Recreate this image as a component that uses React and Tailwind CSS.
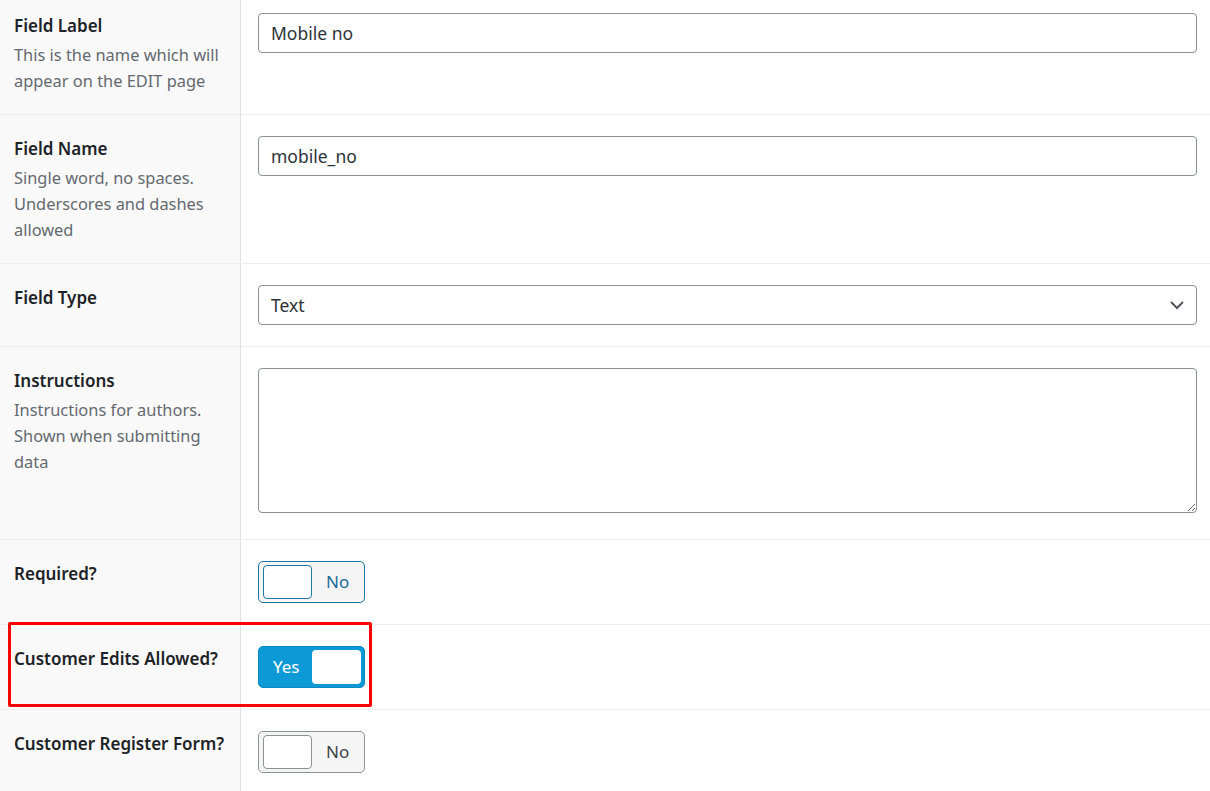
import React from "react";

function Label({ title, desc }) {
  return (
    <div className="w-[241px] shrink-0 bg-[#f9f9f9] border-r border-[#e1e1e1] pl-[14px] pr-[10px] pt-[21px] pb-[20px]">
      <div className="text-[17px] leading-[26px] font-semibold text-[#1d2327]">{title}</div>
      {desc && <div className="mt-[3px] text-[16.4px] leading-[26px] text-[#646970]">{desc}</div>}
    </div>
  );
}

function Toggle({ on, focused }) {
  if (on) {
    return (
      <div className="w-[107px] h-[42px] rounded-[5px] bg-[#0d99d5] border border-[#0b8ac2] flex items-center justify-between pl-[14px] pr-[3px]">
        <span className="text-[17px] text-white">Yes</span>
        <span className="w-[49px] h-[34px] rounded-[4px] bg-white"></span>
      </div>
    );
  }
  return (
    <div
      className={
        "w-[107px] h-[42px] rounded-[5px] bg-[#f5f5f5] border flex items-center pl-[4px] " +
        (focused ? "border-[#1a78a8]" : "border-[#8c8f94]")
      }
    >
      <span
        className={
          "w-[49px] h-[34px] rounded-[4px] bg-white border " +
          (focused ? "border-[#1a78a8]" : "border-[#8c8f94]")
        }
      ></span>
      <span className={"ml-[14px] text-[17px] " + (focused ? "text-[#1a6a99]" : "text-[#3c434a]")}>No</span>
    </div>
  );
}

const inputCls =
  "w-full h-[40px] rounded-[4px] border border-[#8c8f94] bg-white px-[12px] text-[17.5px] text-[#2c3338] outline-none";

export default function App() {
  return (
    <div
      className="w-[1210px] h-[791px] overflow-hidden bg-white"
      style={{ fontFamily: '"Noto Sans", "Open Sans", Arial, sans-serif' }}
    >
      <div className="-mt-[8px]">
        {/* Field Label */}
        <div className="flex border-b border-[#eeeeee]">
          <Label title="Field Label" desc={<>This is the name which will<br />appear on the EDIT page</>} />
          <div className="flex-1 pl-[17px] pr-[13px] pt-[21px]">
            <input className={inputCls} defaultValue="Mobile no" />
          </div>
        </div>

        {/* Field Name */}
        <div className="flex border-b border-[#eeeeee]">
          <Label
            title="Field Name"
            desc={<>Single word, no spaces.<br />Underscores and dashes<br />allowed</>}
          />
          <div className="flex-1 pl-[17px] pr-[13px] pt-[21px]">
            <input className={inputCls} defaultValue="mobile_no" />
          </div>
        </div>

        {/* Field Type */}
        <div className="flex border-b border-[#eeeeee]">
          <Label title="Field Type" />
          <div className="flex-1 pl-[17px] pr-[13px] pt-[21px] pb-[21px]">
            <div className="relative">
              <div className={inputCls + " flex items-center"}>Text</div>
              <svg
                className="absolute right-[12px] top-[13px]"
                width="16"
                height="14"
                viewBox="0 0 16 14"
                fill="none"
                stroke="#50575e"
                strokeWidth="2"
              >
                <path d="M2 4 L8 10 L14 4" />
              </svg>
            </div>
          </div>
        </div>

        {/* Instructions */}
        <div className="flex border-b border-[#eeeeee]">
          <Label
            title="Instructions"
            desc={<>Instructions for authors.<br />Shown when submitting<br />data</>}
          />
          <div className="flex-1 pl-[17px] pr-[13px] pt-[21px] pb-[26px]">
            <textarea className="block w-full h-[145px] rounded-[4px] border border-[#8c8f94] bg-white px-[12px] py-[8px] text-[17px] outline-none" />
          </div>
        </div>

        {/* Required */}
        <div className="flex border-b border-[#eeeeee]">
          <Label title="Required?" />
          <div className="flex-1 pl-[17px] pt-[21px] pb-[21px]">
            <Toggle focused />
          </div>
        </div>

        {/* Customer Edits Allowed */}
        <div className="relative flex border-b border-[#eeeeee]">
          <Label title="Customer Edits Allowed?" />
          <div className="flex-1 pl-[17px] pt-[21px] pb-[21px]">
            <Toggle on />
          </div>
          <div className="absolute left-[8px] -top-[3px] w-[364px] h-[85px] border-[3px] border-[#ff0000] rounded-[2px] pointer-events-none"></div>
        </div>

        {/* Customer Register Form */}
        <div className="flex border-b border-[#eeeeee]">
          <Label title="Customer Register Form?" />
          <div className="flex-1 pl-[17px] pt-[21px] pb-[21px]">
            <Toggle />
          </div>
        </div>
      </div>
    </div>
  );
}
